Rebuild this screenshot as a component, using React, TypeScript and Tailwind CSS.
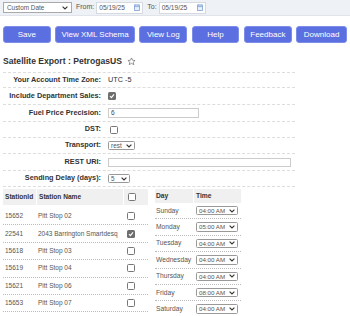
import React from 'react';

const font = { fontFamily: '"Liberation Sans", Arial, sans-serif' };

const Chevron: React.FC = () => (
  <svg width="6" height="4" viewBox="0 0 6 4" className="shrink-0">
    <path d="M0.6 0.6 L3 3 L5.4 0.6" fill="none" stroke="#333" strokeWidth="1.1" />
  </svg>
);

const Calendar: React.FC = () => (
  <svg width="6" height="7" viewBox="0 0 6 7" className="shrink-0">
    <rect x="0.5" y="1" width="5" height="5.5" fill="#e8f0fb" stroke="#7ea1d6" strokeWidth="0.8" />
    <line x1="0.5" y1="2.6" x2="5.5" y2="2.6" stroke="#7ea1d6" strokeWidth="0.8" />
    <line x1="1.8" y1="0.2" x2="1.8" y2="1.6" stroke="#7ea1d6" strokeWidth="0.7" />
    <line x1="4.2" y1="0.2" x2="4.2" y2="1.6" stroke="#7ea1d6" strokeWidth="0.7" />
  </svg>
);

const Box: React.FC<{ checked?: boolean }> = ({ checked }) =>
  checked ? (
    <div className="w-[8px] h-[8px] rounded-[1.5px] bg-[#6e6e6e] flex items-center justify-center">
      <svg width="6" height="6" viewBox="0 0 6 6">
        <path d="M1 3.2 L2.4 4.6 L5 1.4" fill="none" stroke="#fff" strokeWidth="1.1" />
      </svg>
    </div>
  ) : (
    <div className="w-[8px] h-[8px] rounded-[1.5px] border border-[#767676] bg-white" />
  );

const FakeSelect: React.FC<{ value: string; className: string }> = ({ value, className }) => (
  <div className={`flex items-center justify-between border border-[#999] rounded-[1.5px] bg-white px-[2px] text-[#555] ${className}`}>
    <span>{value}</span>
    <Chevron />
  </div>
);

const stations = [
  { id: '15652', name: 'Pitt Stop 02', on: false },
  { id: '22541', name: '2043 Barrington Smartdesq', on: true },
  { id: '15618', name: 'Pitt Stop 03', on: false },
  { id: '15619', name: 'Pitt Stop 04', on: false },
  { id: '15621', name: 'Pitt Stop 06', on: false },
  { id: '15653', name: 'Pitt Stop 07', on: false },
];

const days = [
  ['Sunday', '04:00 AM'],
  ['Monday', '05:00 AM'],
  ['Tuesday', '04:00 AM'],
  ['Wednesday', '04:00 AM'],
  ['Thursday', '04:00 AM'],
  ['Friday', '08:00 AM'],
  ['Saturday', '04:00 AM'],
];

const buttons = [
  ['Save', 'w-[48px]'],
  ['View XML Schema', 'w-[80px]'],
  ['View Log', 'w-[48px]'],
  ['Help', 'w-[48px]'],
  ['Feedback', 'w-[48px]'],
  ['Download', 'w-[51px]'],
];

export default function App() {
  const rows: { label: string; h: string; value: React.ReactNode }[] = [
    { label: 'Your Account Time Zone:', h: 'h-[15px]', value: <span className="text-[7.3px] text-[#333]">UTC -5</span> },
    { label: 'Include Department Sales:', h: 'h-[17px]', value: <Box checked /> },
    {
      label: 'Fuel Price Precision:',
      h: 'h-[17px]',
      value: (
        <div className="w-[91px] h-[10px] border border-[#ccc] bg-white text-[6.5px] text-[#444] flex items-center px-[2px]">6</div>
      ),
    },
    { label: 'DST:', h: 'h-[16px]', value: <div className="ml-[2px]"><Box /></div> },
    { label: 'Transport:', h: 'h-[16px]', value: <FakeSelect value="rest" className="w-[27px] h-[9px] text-[6.4px]" /> },
    {
      label: 'REST URI:',
      h: 'h-[17px]',
      value: <div className="w-[183px] h-[9px] border border-[#ccc] bg-white" />,
    },
    { label: 'Sending Delay (days):', h: 'h-[16px]', value: <FakeSelect value="5" className="w-[22px] h-[9px] text-[6.4px]" /> },
  ];

  return (
    <div className="w-[350px] h-[316px] overflow-hidden bg-white" style={font}>
      {/* filter bar */}
      <div className="h-[16px] bg-[#eef1f5] border-b border-[#e1e4ea] flex items-center px-[3px]">
        <FakeSelect value="Custom Date" className="w-[69px] h-[11px] text-[6.4px] rounded-none border-[#a9a9a9] px-[3px]" />
        <span className="ml-[4px] text-[7px] text-[#555]">From:</span>
        <div className="ml-[2px] w-[47px] h-[12px] border border-[#d5d9e0] bg-white flex items-center justify-between px-[2px] text-[6.6px] text-[#555]">
          <span>05/19/25</span>
          <Calendar />
        </div>
        <span className="ml-[4px] text-[7px] text-[#555]">To:</span>
        <div className="ml-[2px] w-[47px] h-[12px] border border-[#d5d9e0] bg-white flex items-center justify-between px-[2px] text-[6.6px] text-[#555]">
          <span>05/19/25</span>
          <Calendar />
        </div>
      </div>

      {/* actions */}
      <div className="mt-[10px] flex gap-[4.5px] px-[3px]">
        {buttons.map(([label, w]) => (
          <div
            key={label}
            className={`${w} h-[17px] rounded-[3px] bg-[#5b6fe1] border border-[#7d8ee8] text-white text-[8px] flex items-center justify-center`}
          >
            {label}
          </div>
        ))}
      </div>

      {/* title */}
      <div className="mt-[13px] px-[3px] flex items-center gap-[5px] h-[10px]">
        <span className="text-[8.6px] font-bold text-[#333]">Satellite Export : PetrogasUS</span>
        <svg width="9" height="9" viewBox="0 0 24 24">
          <path
            d="M12 2.5 L14.9 8.6 L21.5 9.3 L16.6 13.8 L18 20.4 L12 17 L6 20.4 L7.4 13.8 L2.5 9.3 L9.1 8.6 Z"
            fill="none"
            stroke="#666"
            strokeWidth="1.8"
            strokeLinejoin="round"
          />
        </svg>
      </div>

      {/* settings */}
      <div className="mt-[6px] mx-[3px] w-[292px] border-t border-dashed border-[#ddd]">
        {rows.map((r) => (
          <div key={r.label} className={`${r.h} flex items-center border-b border-dashed border-[#ddd]`}>
            <div className="w-[98px] text-right text-[7.3px] font-bold text-[#333] whitespace-nowrap">{r.label}</div>
            <div className="pl-[7px] flex items-center">{r.value}</div>
          </div>
        ))}
      </div>

      {/* stations + schedule */}
      <div className="mt-[2px] flex items-start px-[3px] gap-[7px]">
        <div className="w-[145px]">
          <div className="h-[16px] flex gap-px">
            <div className="w-[33px] bg-[#f0f0f0] flex items-center pl-[2px] text-[6.6px] font-bold text-[#333]">StationId</div>
            <div className="w-[86px] bg-[#f0f0f0] flex items-center pl-[2px] text-[6.6px] font-bold text-[#333]">Station Name</div>
            <div className="flex-1 bg-[#f0f0f0] flex items-center pl-[4px]"><Box /></div>
          </div>
          <div className="pt-[3px]">
            {stations.map((s) => (
              <div key={s.id} className="h-[17.4px] flex border-b border-dotted border-[#bbb] text-[6.5px] text-[#555]">
                <div className="w-[33px] flex items-center pl-[2px]">{s.id}</div>
                <div className="w-[87px] flex items-center pl-[2px] whitespace-nowrap">{s.name}</div>
                <div className="flex-1 flex items-center pl-[4px]"><Box checked={s.on} /></div>
              </div>
            ))}
          </div>
        </div>

        <div className="w-[86px]">
          <div className="h-[14px] flex gap-px">
            <div className="w-[38px] bg-[#f0f0f0] flex items-center pl-[1px] text-[6.7px] font-bold text-[#333]">Day</div>
            <div className="flex-1 bg-[#f0f0f0] flex items-center pl-[2px] text-[6.7px] font-bold text-[#333]">Time</div>
          </div>
          {days.map(([d, t]) => (
            <div key={d} className="h-[16.4px] flex gap-px">
              <div className="w-[38px] flex items-center pl-[1px] border-b border-dotted border-[#bbb] text-[6.7px] text-[#555]">{d}</div>
              <div className="flex-1 flex items-center pl-[2px] border-b border-dotted border-[#bbb]">
                <FakeSelect value={t} className="w-[42px] h-[9.5px] text-[6.2px]" />
              </div>
            </div>
          ))}
        </div>
      </div>
    </div>
  );
}
